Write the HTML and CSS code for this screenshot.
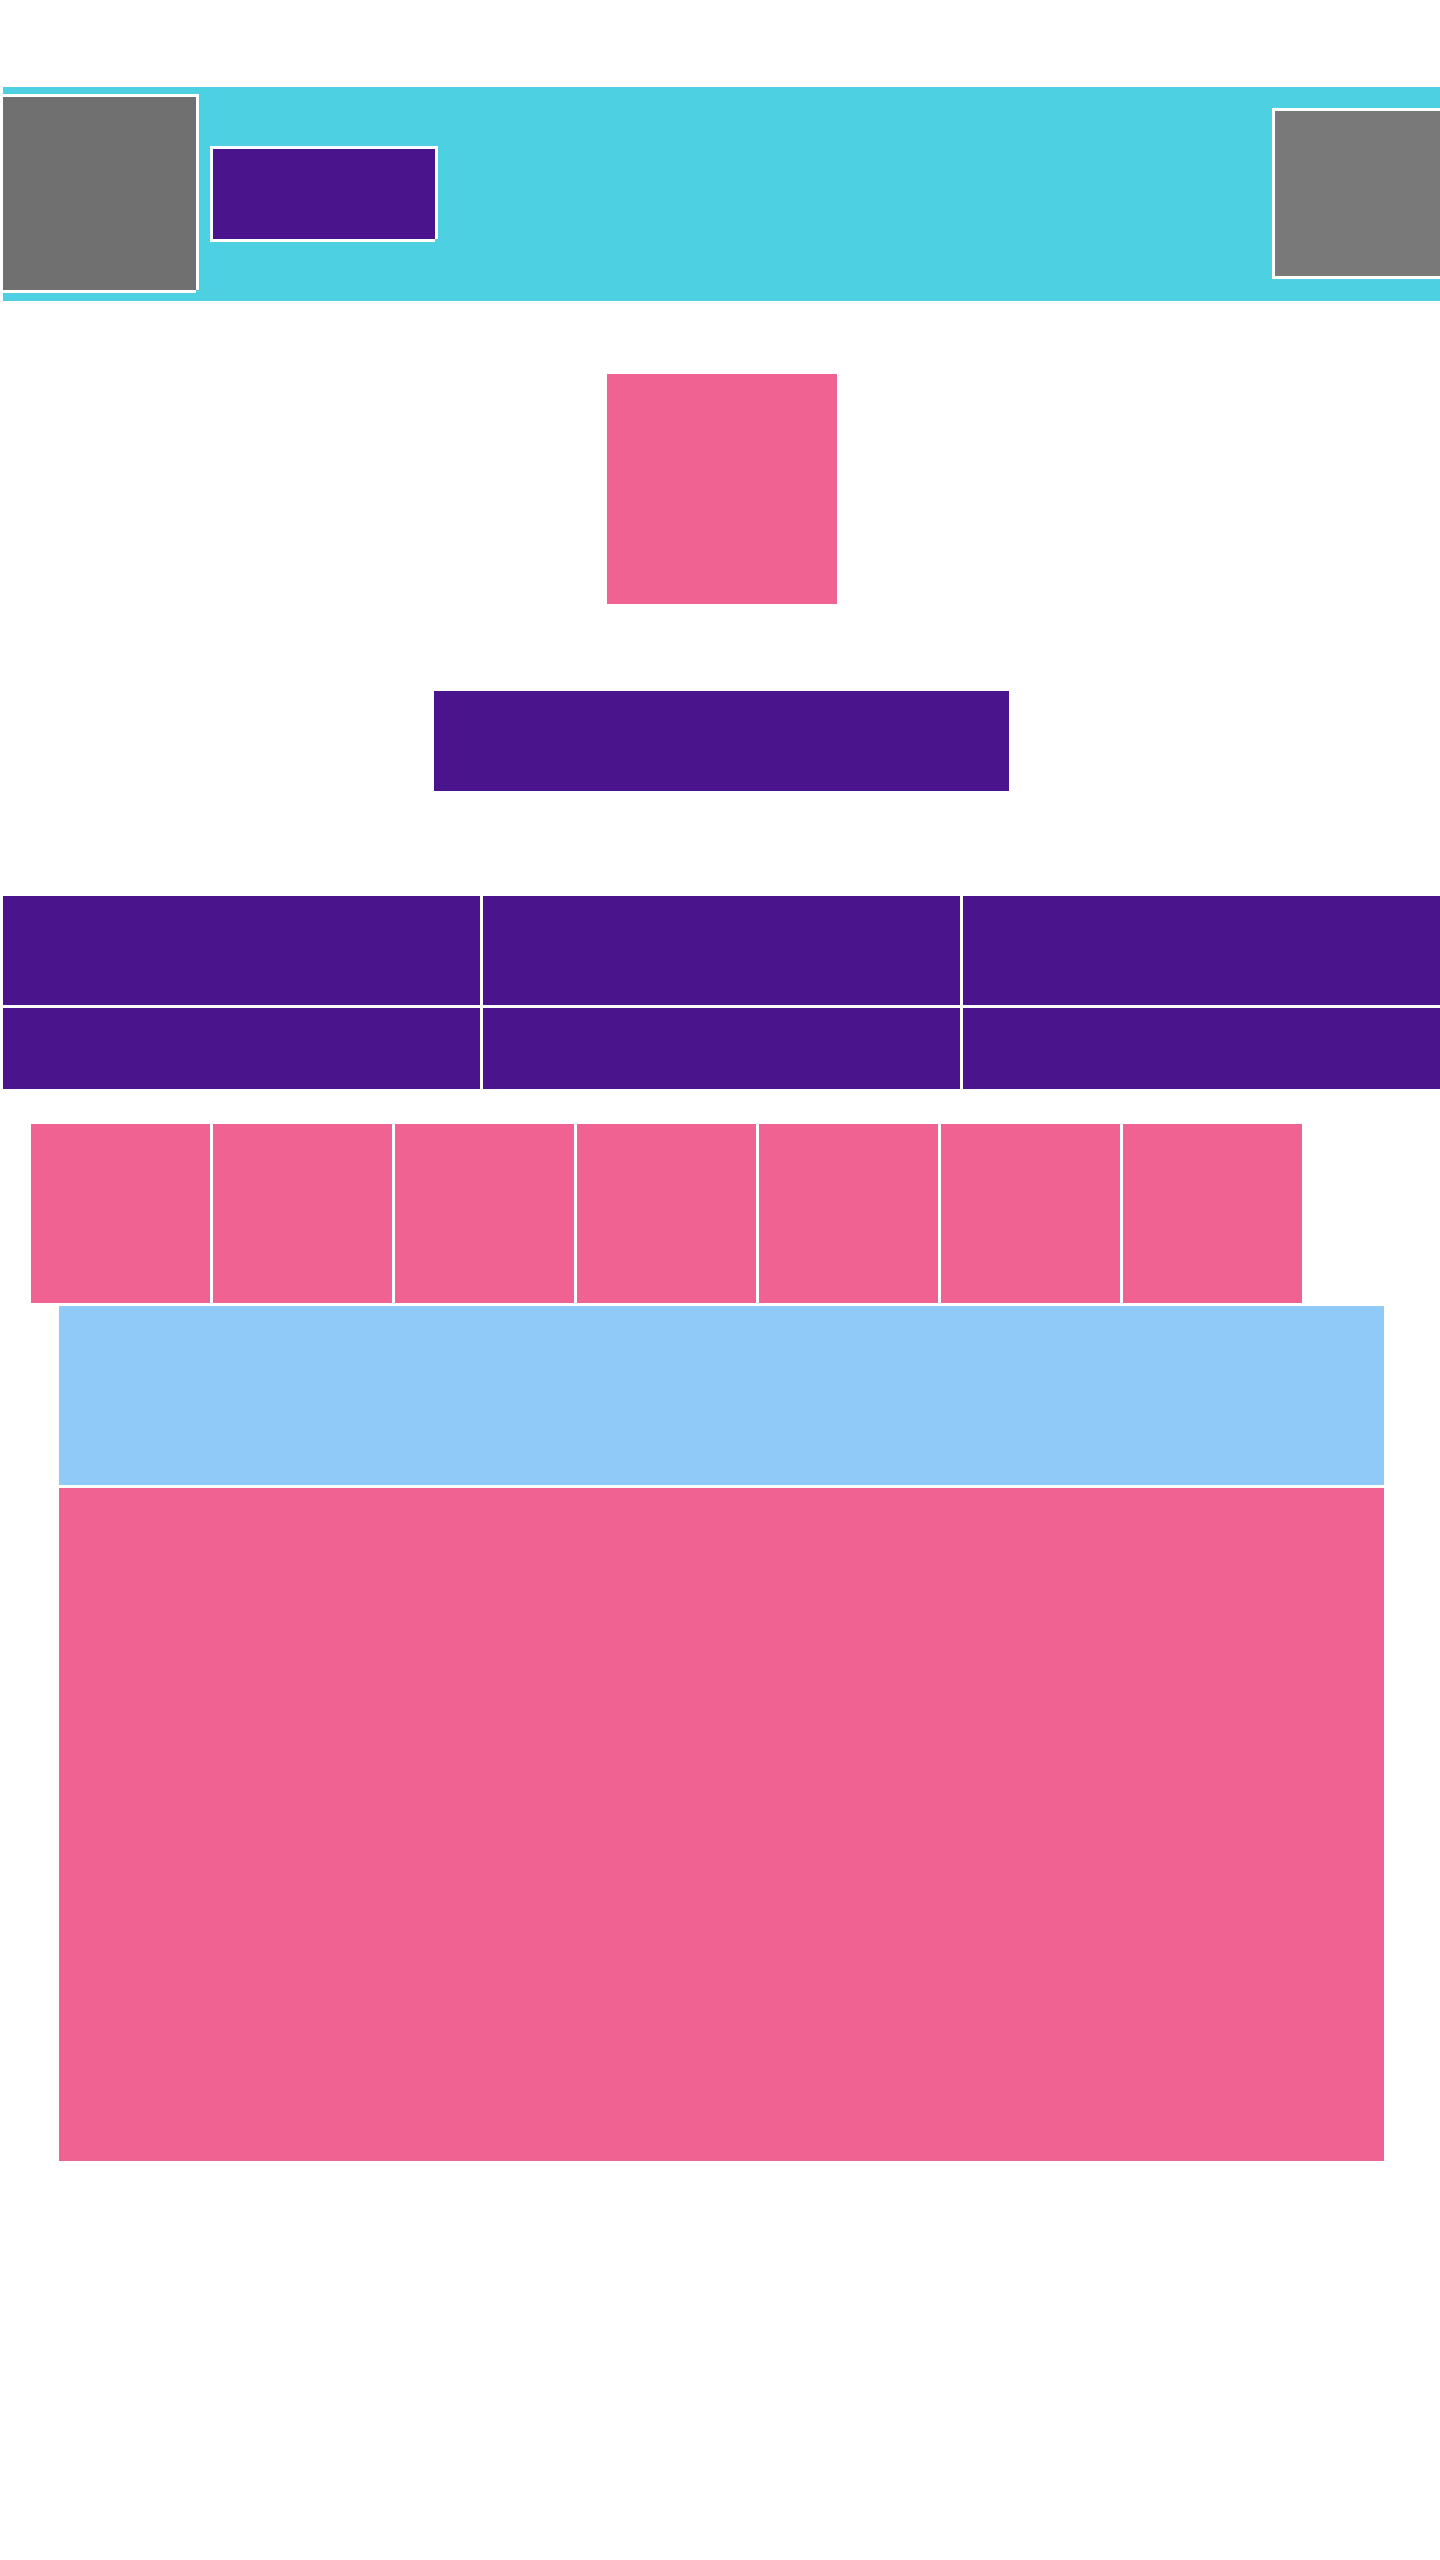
FILE: index.html
```html
<!DOCTYPE html>
<html lang="en">
  <head>
    <meta charset="UTF-8" />
    <meta name="viewport" content="width=device-width, initial-scale=1.0" />
    <title>Layout</title>
    <link rel="stylesheet" href="styles.css">
  </head>
  <body>
    <div class="page">
      <div class="header">
        <div class="logo"></div>
        <div class="brand"></div>
        <div class="avatar"></div>
      </div>

      <div class="hero"></div>
      <div class="cta"></div>

      <div class="grid">
        <div class="cell row_a"></div>
        <div class="cell row_a"></div>
        <div class="cell row_a"></div>
        <div class="cell row_b"></div>
        <div class="cell row_b"></div>
        <div class="cell row_b"></div>
      </div>

      <ul class="thumbs">
        <li></li>
        <li></li>
        <li></li>
        <li></li>
        <li></li>
        <li></li>
        <li></li>
      </ul>

      <div class="panel">
        <div class="panel_top"></div>
        <div class="panel_body"></div>
      </div>
    </div>
  </body>
</html>
```

FILE: styles.css
```css
* {
  padding: 0;
  margin: 0;
}
html,
body {
  background-color: #fff;
  overflow-x: hidden;
}
ul {
  list-style: none;
}
.page {
  width: 1437px;
  margin-left: 3px;
  padding-top: 87px;
  padding-bottom: 399px;
}

/* header bar */
.header {
  height: 214px;
  background: #4dd0e1;
  display: flex;
  align-items: center;
  overflow: hidden;
}
.logo,
.brand,
.avatar {
  /* 3px white frame, bottom-right corner left open */
  box-shadow: -3px -3px 0 #fff, 0 -3px 0 #fff, 3px -3px 0 #fff,
    -3px 0 0 #fff, 3px 0 0 #fff, -3px 3px 0 #fff, 0 3px 0 #fff;
}
.logo {
  width: 193px;
  height: 193px;
  margin-top: -1px;
  background: #707070;
}
.brand {
  width: 222px;
  height: 90px;
  margin-left: 17px;
  background: #4a148c;
}
.avatar {
  width: 193px;
  height: 165px;
  margin-left: auto;
  margin-right: -28px;
  margin-top: -1px;
  background: #797979;
}

/* centered blocks */
.hero {
  width: 230px;
  height: 230px;
  margin: 73px auto 0;
  background: #f06292;
}
.cta {
  width: 575px;
  height: 100px;
  margin: 87px auto 0;
  background: #4a148c;
}

/* 3 x 2 grid */
.grid {
  display: grid;
  grid-template-columns: repeat(3, 1fr);
  grid-template-rows: 109px 81px;
  gap: 3px;
  margin-top: 105px;
}
.cell {
  background: #4a148c;
}

/* thumbnails */
.thumbs {
  display: flex;
  gap: 3px;
  margin: 35px 0 0 28px;
}
.thumbs li {
  width: 179px;
  height: 179px;
  background: #f06292;
}

/* panel */
.panel {
  width: 1325px;
  margin: 3px 0 0 56px;
  display: flex;
  flex-direction: column;
  gap: 3px;
}
.panel_top {
  height: 179px;
  background: #90caf9;
}
.panel_body {
  height: 673px;
  background: #f06292;
}
```
